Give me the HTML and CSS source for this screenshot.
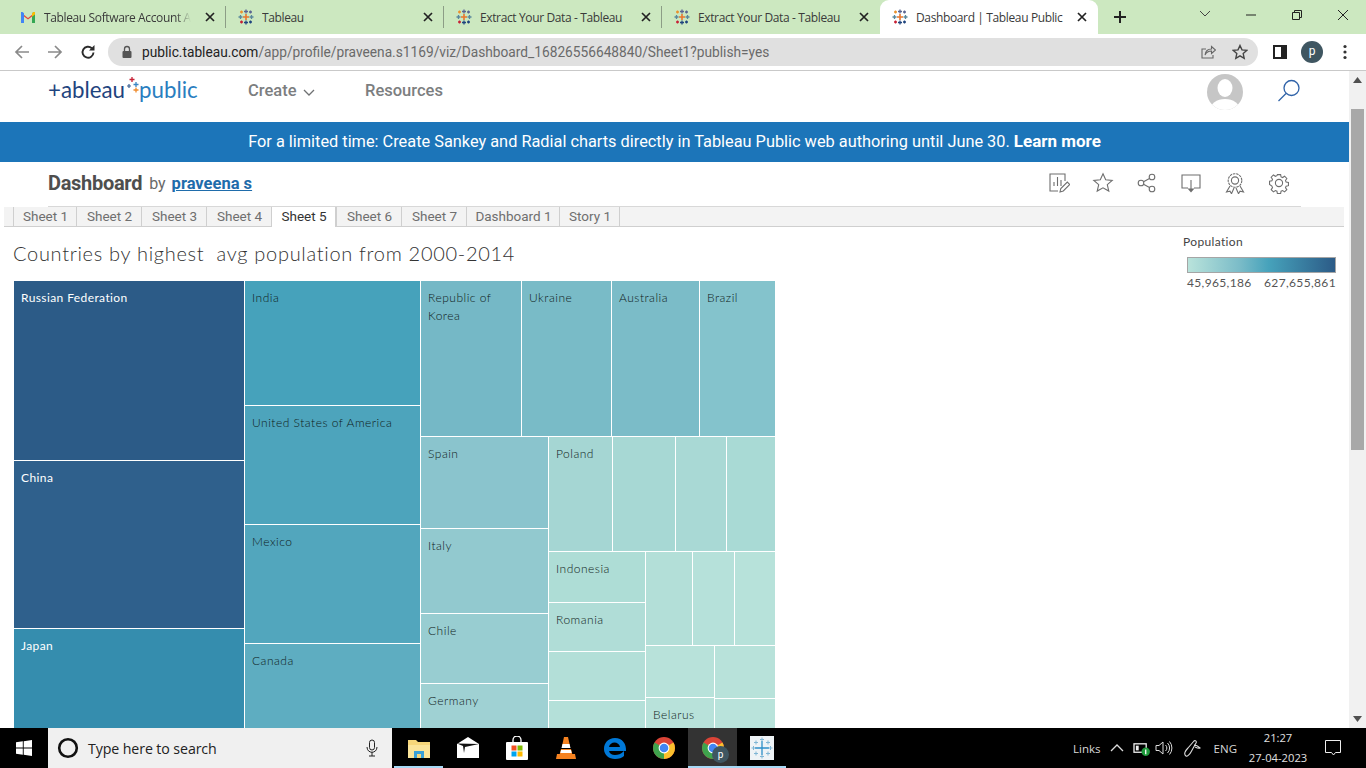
FILE: index.html
```html
<!DOCTYPE html>
<html lang="en">
<head>
<meta charset="utf-8">
<title>Dashboard | Tableau Public</title>
<link rel="stylesheet" href="styles.css">
</head>
<body>
<svg class="defs" width="0" height="0">
  <symbol id="tb" viewBox="0 0 16 16">
    <g fill="none" stroke-width="1.3">
      <path stroke="#e8762d" stroke-width="1.6" d="M8 5v6M5 8h6"/>
      <path stroke="#5b6591" d="M8 .5v4M6 2.5h4"/>
      <path stroke="#1f447e" d="M8 11.5v4M6 13.5h4"/>
      <path stroke="#59879b" d="M.5 8h4M2.5 6v4"/>
      <path stroke="#59879b" d="M11.5 8h4M13.5 6v4"/>
      <path stroke="#eb912c" d="M3.5 1.5v3M2 3h3"/>
      <path stroke="#5b6591" d="M12.5 1.5v3M11 3h3"/>
      <path stroke="#c72035" d="M3.5 11.5v3M2 13h3"/>
      <path stroke="#1f447e" d="M12.5 11.5v3M11 13h3"/>
    </g>
  </symbol>
  <symbol id="cr" viewBox="0 0 24 24">
    <circle cx="12" cy="12" r="11" fill="#db4437"/>
    <path d="M12 12 21.5 6.5A11 11 0 0 1 12 23z" fill="#fbc02d"/>
    <path d="M12 12 12 23A11 11 0 0 1 2.5 6.5z" fill="#3fa34d"/>
    <circle cx="12" cy="12" r="5.4" fill="#fff"/>
    <circle cx="12" cy="12" r="4.3" fill="#4285f4"/>
  </symbol>
  <symbol id="x" viewBox="0 0 10 10">
    <path d="M1 1l8 8M9 1l-8 8" fill="none" stroke="#222" stroke-width="1.7"/>
  </symbol>
</svg>

<header class="chrome">
  <div class="tabstrip">
    <div class="tab">
      <svg class="fav" viewBox="0 0 16 16"><path d="M1 14V3.5L8 9l7-5.5V14h-3V7.5L8 10.5 4 7.5V14z" fill="#e8453c"/><path d="M1 14V3h1.5L4 4.3V14z" fill="#4285f4"/><path d="M12 14V4.3L13.5 3H15v11z" fill="#34a853"/><path d="M12 4.3 13.5 3 15 3v2.5L12 7.7z" fill="#fbbc04"/></svg>
      <span class="tab-title tab-fade">Tableau Software Account Ac</span>
      <svg class="tab-x tab-x-near"><use href="#x"/></svg>
    </div>
    <div class="tab">
      <svg class="fav"><use href="#tb"/></svg>
      <span class="tab-title">Tableau</span>
      <svg class="tab-x"><use href="#x"/></svg>
    </div>
    <div class="tab">
      <svg class="fav"><use href="#tb"/></svg>
      <span class="tab-title">Extract Your Data - Tableau</span>
      <svg class="tab-x"><use href="#x"/></svg>
    </div>
    <div class="tab tab-last">
      <svg class="fav"><use href="#tb"/></svg>
      <span class="tab-title">Extract Your Data - Tableau</span>
      <svg class="tab-x"><use href="#x"/></svg>
    </div>
    <div class="tab tab-active">
      <svg class="fav"><use href="#tb"/></svg>
      <span class="tab-title">Dashboard | Tableau Public</span>
      <svg class="tab-x"><use href="#x"/></svg>
    </div>
    <svg class="newtab" viewBox="0 0 14 14"><path d="M7 1v12M1 7h12" stroke="#222" stroke-width="2" fill="none"/></svg>
    <div class="winctl">
      <svg class="win-i" viewBox="0 0 46 14"><path d="M18 3l5 5 5-5" fill="none" stroke="#444" stroke-width="1"/></svg>
      <svg class="win-i" viewBox="0 0 46 14"><path d="M18 7h10" fill="none" stroke="#222" stroke-width="1"/></svg>
      <svg class="win-i" viewBox="0 0 46 14"><path d="M18.500 4.500h7v7h-7zM20.500 4.500v-2h7v7h-2" fill="none" stroke="#222" stroke-width="1"/></svg>
      <svg class="win-i" viewBox="0 0 46 14"><path d="M18 2l10 10M28 2 18 12" fill="none" stroke="#222" stroke-width="1"/></svg>
    </div>
  </div>
  <div class="toolbar">
    <svg class="tool" viewBox="0 0 16 16"><path d="M15 8H2M8 2 2 8l6 6" fill="none" stroke="#8a8a8a" stroke-width="1.7"/></svg>
    <svg class="tool" viewBox="0 0 16 16"><path d="M1 8h13M8 2l6 6-6 6" fill="none" stroke="#8a8a8a" stroke-width="1.7"/></svg>
    <svg class="tool" viewBox="0 0 16 16"><path d="M13.500 8.500A5.500 5.500 0 1 1 11.800 4.200" fill="none" stroke="#2b2b2b" stroke-width="1.900"/><path d="M14.500 1v5.500H9z" fill="#2b2b2b"/></svg>
    <div class="omnibox">
      <svg class="lock" viewBox="0 0 12 14"><path d="M3.500 6V4a2.500 2.500 0 0 1 5 0v2" fill="none" stroke="#555" stroke-width="1.300"/><rect x="1.500" y="6" width="9" height="7" rx="1" fill="#555"/></svg>
      <span class="url"><span class="url-host">public.tableau.com</span>/app/profile/praveena.s1169/viz/Dashboard_16826556648840/Sheet1?publish=yes</span>
      <svg class="omni-i" viewBox="0 0 16 16"><path d="M6 5H2v9h11v-3" fill="none" stroke="#666" stroke-width="1.100"/><path d="M5 11c.5-4 3.500-6 6.500-6V2.500L15.500 6l-4 3.500V7c-2.500 0-5 1-6.500 4z" fill="none" stroke="#666" stroke-width="1.100"/></svg>
      <svg class="omni-i" viewBox="0 0 16 16"><path d="M8 1.500l2 4.400 4.700.5-3.500 3.200 1 4.700L8 11.900 3.800 14.300l1-4.700L1.300 6.400 6 5.900z" fill="none" stroke="#444" stroke-width="1.400"/></svg>
    </div>
    <svg class="side" viewBox="0 0 14 14"><path d="M0 0h14v14H0z" fill="#222"/><path d="M2 2h6v10H2z" fill="#fff"/></svg>
    <span class="profile">p</span>
    <svg class="menu" viewBox="0 0 4 16"><circle cx="2" cy="2.500" r="1.600" fill="#333"/><circle cx="2" cy="8" r="1.600" fill="#333"/><circle cx="2" cy="13.500" r="1.600" fill="#333"/></svg>
  </div>
</header>

<div class="viewport">
  <main class="page">
    <nav class="sitenav">
      <a class="logo">
        <span class="logo-a">+ableau</span>
        <svg class="logo-stars" viewBox="0 0 12 20">
          <path d="M5 0v5M2.500 2.500h5" stroke="#c72035" stroke-width="1.300" fill="none"/>
          <path d="M9 5v5M6.500 7.500h5" stroke="#3a86c4" stroke-width="1.300" fill="none"/>
          <path d="M2 7v4M0 9h4" stroke="#3a5f91" stroke-width="1.200" fill="none"/>
          <path d="M9 10.500v5M6.500 13h5" stroke="#ef8a2b" stroke-width="1.300" fill="none"/>
        </svg>
        <span class="logo-b">public</span>
      </a>
      <a class="navlink navlink-create">Create
        <svg class="chev" viewBox="0 0 12 7"><path d="M1 1l5 5 5-5" fill="none" stroke="#6f7173" stroke-width="1.300"/></svg>
      </a>
      <a class="navlink">Resources</a>
      <svg class="avatar" viewBox="0 0 36 36"><defs><clipPath id="av"><circle cx="18" cy="18" r="18"/></clipPath></defs><g clip-path="url(#av)"><rect width="36" height="36" fill="#c6c6c6"/><ellipse cx="18" cy="14" rx="7.500" ry="9" fill="#fff"/><ellipse cx="18" cy="36" rx="15" ry="11" fill="#fff"/></g></svg>
      <svg class="search" viewBox="0 0 24 24"><circle cx="14.500" cy="9" r="7.500" fill="none" stroke="#2f62a8" stroke-width="1.300"/><path d="M9 14.500 1.500 22" stroke="#2f62a8" stroke-width="1.300" fill="none"/></svg>
    </nav>

    <div class="banner">For a limited time: Create Sankey and Radial charts directly in Tableau Public web authoring until June 30. <b>Learn more</b></div>

    <div class="titlerow">
      <h1 class="viz-title">Dashboard</h1>
      <span class="by">by</span>
      <a class="author">praveena s</a>
      <div class="viz-actions">
        <svg class="act" viewBox="0 0 22 22"><path d="M17 9V2H2v17h8" fill="none" stroke="#6e6e6e" stroke-width="1.100"/><path d="M6 14v-4M9.500 14V5M13 14v-6" stroke="#6e6e6e" stroke-width="1.100" fill="none"/><path d="M12 20l.8-3.500 6.500-6.500 2.500 2.500-6.500 6.500z" fill="none" stroke="#6e6e6e" stroke-width="1.100"/></svg>
        <svg class="act" viewBox="0 0 22 22"><path d="M11 1.800l2.700 6 6.500.6-4.900 4.300 1.500 6.400L11 15.800l-5.800 3.300 1.500-6.400L1.800 8.400l6.500-.6z" fill="none" stroke="#6e6e6e" stroke-width="1.100"/></svg>
        <svg class="act" viewBox="0 0 22 22"><circle cx="5" cy="11" r="2.800" fill="none" stroke="#6e6e6e" stroke-width="1.100"/><circle cx="16" cy="5" r="2.800" fill="none" stroke="#6e6e6e" stroke-width="1.100"/><circle cx="16" cy="17" r="2.800" fill="none" stroke="#6e6e6e" stroke-width="1.100"/><path d="M7.500 9.700l6-3.300M7.500 12.300l6 3.300" stroke="#6e6e6e" stroke-width="1.100" fill="none"/></svg>
        <svg class="act" viewBox="0 0 22 22"><path d="M8 16H2V3h18v13h-6" fill="none" stroke="#6e6e6e" stroke-width="1.100"/><path d="M11 8v10" stroke="#6e6e6e" stroke-width="1.100"/><path d="M7.500 16.500h7L11 20.500z" fill="#6e6e6e"/></svg>
        <svg class="act" viewBox="0 0 22 22"><circle cx="11" cy="8.500" r="6.800" fill="none" stroke="#6e6e6e" stroke-width="1.100" stroke-dasharray="2.500 .8"/><circle cx="11" cy="8.500" r="3.600" fill="none" stroke="#6e6e6e" stroke-width="1.100"/><path d="M6 14l-3.500 6 3.500-.8 1.500 2.500L10 16M16 14l3.500 6-3.500-.8-1.500 2.500L12 16" fill="none" stroke="#6e6e6e" stroke-width="1.100"/></svg>
        <svg class="act" viewBox="0 0 22 22"><path d="M9.200 2h3.600l.5 2.600 1.700.7 2.200-1.500 2.500 2.500-1.500 2.200.7 1.700 2.600.5v3.600l-2.600.5-.7 1.700 1.500 2.200-2.500 2.500-2.200-1.500-1.700.7-.5 2.600H9.200l-.5-2.600-1.700-.7-2.200 1.500-2.500-2.500 1.500-2.200-.7-1.700L.5 12.900V9.300l2.600-.5.7-1.700L2.300 4.900l2.500-2.500L7 3.900l1.700-.7z" transform="translate(1.100 .8) scale(.9)" fill="none" stroke="#6e6e6e" stroke-width="1.200"/><circle cx="11" cy="11" r="3.600" fill="none" stroke="#6e6e6e" stroke-width="1.100"/></svg>
      </div>
    </div>

    <div class="sheetbar">
      <span class="sheet sheet-first">Sheet 1</span>
      <span class="sheet">Sheet 2</span>
      <span class="sheet">Sheet 3</span>
      <span class="sheet">Sheet 4</span>
      <span class="sheet sheet-on">Sheet 5</span>
      <span class="sheet">Sheet 6</span>
      <span class="sheet">Sheet 7</span>
      <span class="sheet sheet-dash">Dashboard 1</span>
      <span class="sheet sheet-story">Story 1</span>
    </div>

    <section class="viz">
      <div class="viz-main">
        <h2 class="chart-title">Countries by highest  avg population from 2000-2014</h2>
        <div class="tm">
          <div class="tm-col" style="width:230px">
            <div class="cell light" style="height:179px;background:#2c5b87">Russian Federation</div>
            <div class="cell light" style="height:167px;background:#2f608c">China</div>
            <div class="cell light" style="height:180px;background:#358dae">Japan</div>
          </div>
          <div class="tm-col" style="width:175px">
            <div class="cell" style="height:124px;background:#46a2bb">India</div>
            <div class="cell" style="height:118px;background:#4da4bc">United States of America</div>
            <div class="cell" style="height:118px;background:#52a6bd">Mexico</div>
            <div class="cell" style="height:110px;background:#5eadc1">Canada</div>
          </div>
          <div class="tm-col" style="width:354px">
            <div class="tm-row" style="height:155px">
              <div class="cell" style="width:100px;background:#75b8c6">Republic of Korea</div>
              <div class="cell" style="width:89px;background:#79bbc7">Ukraine</div>
              <div class="cell" style="width:87px;background:#7bbcc8">Australia</div>
              <div class="cell" style="width:75px;background:#84c3cc">Brazil</div>
            </div>
            <div class="tm-row" style="height:320px">
              <div class="tm-col" style="width:127px">
                <div class="cell" style="height:91px;background:#8ac4cd">Spain</div>
                <div class="cell" style="height:84px;background:#92c9cf">Italy</div>
                <div class="cell" style="height:69px;background:#98cdd1">Chile</div>
                <div class="cell" style="height:72px;background:#9fd1d3">Germany</div>
              </div>
              <div class="tm-col" style="width:226px">
                <div class="tm-row" style="height:114px">
                  <div class="cell" style="width:63px;background:#a5d6d3">Poland</div>
                  <div class="cell" style="width:62px;background:#a7d8d4"></div>
                  <div class="cell" style="width:50px;background:#a9d9d5"></div>
                  <div class="cell" style="width:48px;background:#a9dad5"></div>
                </div>
                <div class="tm-row" style="height:205px">
                  <div class="tm-col" style="width:96px">
                    <div class="cell" style="height:50px;background:#aeddd6">Indonesia</div>
                    <div class="cell" style="height:48px;background:#b0ddd7">Romania</div>
                    <div class="cell" style="height:48px;background:#b3dfd8"></div>
                    <div class="cell" style="height:56px;background:#b4e0d9"></div>
                  </div>
                  <div class="tm-col" style="width:129px">
                    <div class="tm-row" style="height:93px">
                      <div class="cell" style="width:46px;background:#b3dfd8"></div>
                      <div class="cell" style="width:41px;background:#b6e1da"></div>
                      <div class="cell" style="width:40px;background:#b7e2da"></div>
                    </div>
                    <div class="tm-row" style="height:111px">
                      <div class="tm-col" style="width:68px">
                        <div class="cell" style="height:51px;background:#b8e2da"></div>
                        <div class="cell" style="height:59px;background:#b8e2da">Belarus</div>
                      </div>
                      <div class="tm-col" style="width:60px">
                        <div class="cell" style="height:52px;background:#b8e2da"></div>
                        <div class="cell" style="height:58px;background:#b9e3db"></div>
                      </div>
                    </div>
                  </div>
                </div>
              </div>
            </div>
          </div>
        </div>
      </div>
      <aside class="legend">
        <div class="legend-title">Population</div>
        <div class="legend-bar"></div>
        <div class="legend-vals"><span>45,965,186</span><span>627,655,861</span></div>
      </aside>
    </section>
  </main>
  <div class="scrollbar">
    <svg class="sb-arrow" viewBox="0 0 9 6"><path d="M4.500 0 9 6H0z" fill="#505050"/></svg>
    <div class="sb-gap-top"></div>
    <div class="sb-thumb"></div>
    <div class="sb-gap"></div>
    <svg class="sb-arrow" viewBox="0 0 9 6"><path d="M0 0h9L4.500 6z" fill="#505050"/></svg>
  </div>
</div>

<footer class="taskbar">
  <svg class="start" viewBox="0 0 16 16"><path d="M0 2.300 6.800 1.300v6.200H0zM7.700 1.200 16 0v7.500H7.700zM0 8.500h6.800v6.200L0 13.700zM7.700 8.500H16V16l-8.300-1.200z" fill="#fff"/></svg>
  <div class="searchbox">
    <svg class="cortana" viewBox="0 0 22 22"><circle cx="11" cy="11" r="8.800" fill="none" stroke="#111" stroke-width="2.600"/></svg>
    <span class="search-text">Type here to search</span>
    <svg class="mic" viewBox="0 0 12 18"><rect x="3.500" y="1" width="5" height="10" rx="2.500" fill="none" stroke="#222"/><path d="M1 8c0 7 10 7 10 0M6 13v4M3 17h6" fill="none" stroke="#222"/></svg>
  </div>
  <div class="tb-app tb-open">
    <svg class="tb-icon" viewBox="0 0 24 24"><path d="M1 4h8l2 2h12v16H1z" fill="#f6d67a"/><path d="M1 9h22v13H1z" fill="#fbe49a"/><path d="M7 15h10v7H7z" fill="#3aa0d8"/><path d="M10 18h4v4h-4z" fill="#f6d67a"/></svg>
  </div>
  <div class="tb-app">
    <svg class="tb-icon" viewBox="0 0 24 24"><path d="M1 8 12 1l11 7v14H1z" fill="#fff"/><path d="M1 7.500 23 8 9 11l-1 6-1-7z" fill="#111"/></svg>
  </div>
  <div class="tb-app">
    <svg class="tb-icon" viewBox="0 0 24 24"><path d="M8 7V4a4 4 0 0 1 8 0v3" fill="none" stroke="#fff" stroke-width="1.300"/><rect x="1" y="6" width="22" height="18" rx="1" fill="#fff"/><rect x="6.500" y="9.500" width="5" height="5" fill="#f25022"/><rect x="12.500" y="9.500" width="5" height="5" fill="#7fba00"/><rect x="6.500" y="15.500" width="5" height="5" fill="#00a4ef"/><rect x="12.500" y="15.500" width="5" height="5" fill="#ffb900"/></svg>
  </div>
  <div class="tb-app">
    <svg class="tb-icon" viewBox="0 0 24 24"><path d="M10 1h4l2 9H8z" fill="#f58220"/><path d="M8.500 8h7l1 4h-9z" fill="#fff"/><path d="M7 13h10l1.500 6h-13z" fill="#f58220"/><path d="M3 18h18l1 5H2z" fill="#f58220"/><path d="M7 14h10l.7 3H6.300z" fill="#fff"/></svg>
  </div>
  <div class="tb-app">
    <svg class="tb-icon" viewBox="0 0 24 24"><path d="M12 2C5 2 1 7 1 13c0 6 5 10 11 10 4 0 7-1 9-3v-5c-3 3-6 4-9 4-3 0-5.500-1.500-6-4h17c.5-7-3.500-13-11-13zM6 11c.5-3 3-4.500 5.500-4.500S16.500 8 17 11z" fill="#0078d7"/></svg>
  </div>
  <div class="tb-app">
    <svg class="tb-icon"><use href="#cr"/></svg>
  </div>
  <div class="tb-app tb-open tb-active">
    <svg class="tb-icon"><use href="#cr"/></svg>
    <span class="tb-badge">p</span>
  </div>
  <div class="tb-app tb-open">
    <svg class="tb-tab" viewBox="0 0 24 24"><rect width="24" height="24" fill="#eef3f6"/><path d="M12 5v14M5 12h14" stroke="#2c8fc9" stroke-width="1.300"/><path d="M12 1.500v4M10 3.500h4M12 18.500v4M10 20.500h4M1.500 12h4M3.500 10v4M18.500 12h4M20.500 10v4M6 4.500v4M4 6.500h4M18 4.500v4M16 6.500h4M6 15.500v4M4 17.500h4M18 15.500v4M16 17.500h4" stroke="#7fb6d5" stroke-width="1"/></svg>
  </div>
  <div class="tray">
    <span class="tray-text tray-links">Links</span>
    <svg class="tray-caret" viewBox="0 0 14 8"><path d="M1 7l6-6 6 6" fill="none" stroke="#ddd" stroke-width="1.300"/></svg>
    <svg class="tray-bat" viewBox="0 0 18 16"><rect x="1" y="3" width="13" height="9" fill="none" stroke="#eee" stroke-width="1.400"/><rect x="3" y="5" width="3" height="5" fill="#eee"/><circle cx="13.500" cy="11.500" r="4.500" fill="#1e9b3b"/><path d="M13.500 9v5" stroke="#fff" stroke-width="1.400"/></svg>
    <svg class="tray-sp" viewBox="0 0 18 16"><path d="M1 5.500h3L8 2v12L4 10.500H1z" fill="none" stroke="#ddd"/><path d="M10.500 5a4 4 0 0 1 0 6M12.500 3a7 7 0 0 1 0 10M14.500 1.500a10 10 0 0 1 0 13" fill="none" stroke="#ddd"/></svg>
    <svg class="tray-pen" viewBox="0 0 20 18"><path d="M3 17c-3-2 0-6 2-8l6-7c1-1 3 0 2 2l-5 9c-1 2-4 5-5 4zM11 6c2 0 4 1 6 3-1 1-3 0-5-1" fill="none" stroke="#ddd" stroke-width="1.100"/></svg>
    <span class="tray-text tray-lang">ENG</span>
    <div class="clock"><span>21:27</span><span>27-04-2023</span></div>
    <svg class="tray-note" viewBox="0 0 16 16"><path d="M.5.500h15v12h-5l-2 2.500-2-2.500H.5z" fill="none" stroke="#eee"/></svg>
  </div>
</footer>
</body>
</html>
```

FILE: styles.css
```css
* { box-sizing: border-box; }
html, body { margin: 0; height: 100%; }
body {
  width: 1366px; height: 768px; overflow: hidden;
  display: flex; flex-direction: column;
  font-family: Roboto, "Liberation Sans", sans-serif;
  background: #fff;
}
.defs { display: block; height: 0; }
h1, h2 { margin: 0; font-weight: normal; }

/* browser chrome */
.chrome { flex: 0 0 71px; border-bottom: 1px solid #c9c9c9; }
.tabstrip { height: 34px; background: #cce8c0; display: flex; align-items: center; padding-left: 8px; }
.tab { flex: 0 0 218px; height: 34px; display: flex; align-items: center; padding-left: 12px; position: relative; }
.tab:nth-child(1), .tab:nth-child(2), .tab:nth-child(3) { border-right: 1px solid #8c9d86; border-image: linear-gradient(#cce8c0 7px, #8c9d86 7px, #8c9d86 27px, #cce8c0 27px) 1; }
.tab-active { background: #fff; border-radius: 9px 9px 0 0; }
.fav { width: 16px; height: 16px; flex: none; }
.tab-title { margin-left: 8px; width: 147px; font: 12px "Open Sans", sans-serif; color: #3a3a3a; white-space: nowrap; overflow: hidden; letter-spacing: -.37px; }
.tab-fade { width: 153px; -webkit-mask-image: linear-gradient(90deg, #000 132px, transparent 147px); mask-image: linear-gradient(90deg, #000 132px, transparent 147px); }
.tab-x { width: 10px; height: 10px; margin-left: 14px; flex: none; }
.tab-x-near { margin-left: 8px; }
.newtab { width: 14px; height: 14px; margin-left: 15px; }
.winctl { margin-left: auto; display: flex; }
.win-i { width: 46px; height: 14px; margin-top: -4px; }
.toolbar { height: 36px; display: flex; align-items: center; padding-left: 14px; background: #fff; }
.tool { width: 16px; height: 16px; margin-right: 17px; flex: none; }
.omnibox { margin-left: -5px; width: 1150px; height: 28px; border-radius: 14px; background: #e0e0e0; display: flex; align-items: center; padding: 0 10px 0 13px; }
.lock { width: 12px; height: 14px; flex: none; }
.url { margin-left: 9px; flex: 1; font: 13.720px Roboto, sans-serif; color: #6a6a6a; white-space: nowrap; }
.url-host { color: #222; }
.omni-i { width: 16px; height: 16px; margin-left: 16px; flex: none; }
.side { width: 14px; height: 14px; margin-left: 15px; }
.profile { width: 22px; height: 22px; border-radius: 50%; background: #3f5661; color: #fff; font: 12px/21px Roboto, sans-serif; text-align: center; margin-left: 14px; }
.menu { width: 4px; height: 16px; margin-left: 20px; }

/* page */
.viewport { flex: 1; min-height: 0; display: flex; }
.page { width: 1349px; overflow: hidden; flex: none; }
.scrollbar { width: 17px; background: #f1f1f1; display: flex; flex-direction: column; align-items: center; padding: 3px 0; }
.sb-arrow { width: 9px; height: 6px; flex: none; margin: 3px 0; }
.sb-gap-top { height: 23px; flex: none; }
.sb-thumb { width: 13px; height: 341px; background: #a8a8a8; flex: none; }
.sb-gap { flex: 1; }

.sitenav { height: 51px; display: flex; align-items: center; padding: 0 0 12px 48px; }
.logo { display: flex; align-items: center; width: 200px; height: 40px; padding-bottom: 2px; }
.logo-a { font: 400 22.300px Lato, sans-serif; color: #1f447e; }
.logo-b { font: 400 22.300px Lato, sans-serif; color: #2a7ec0; }
.logo-stars { width: 12px; height: 20px; margin: -6px 0 0 2px; flex: none; }
.navlink { font: 500 16.500px Roboto, sans-serif; color: #7c7e80; display: flex; align-items: center; }
.navlink-create { width: 117px; }
.chev { width: 12px; height: 7px; margin-left: 6px; margin-top: 3px; }
.avatar { width: 36px; height: 36px; margin: 1px 0 -1px auto; }
.search { width: 24px; height: 24px; margin-left: 34px; margin-right: 48px; }

.banner { height: 40px; background: #1c75b9; color: #fff; text-align: center; font: 16.340px/39px Roboto, sans-serif; }
.banner b { font-weight: 700; font-size: 17px; }

.titlerow { height: 45px; display: flex; align-items: center; margin: 0 48px; border-bottom: 1px solid #d8d8d8; padding-bottom: 2px; }
.viz-title { font: 700 20px Roboto, sans-serif; color: #4e4e4e; letter-spacing: -.3px; }
.by { font: 16px Roboto, sans-serif; color: #6a6a6a; margin-left: 7px; }
.author { font: 700 16.500px Roboto, sans-serif; color: #1f6cab; text-decoration: underline; margin-left: 6px; }
.viz-actions { margin-left: auto; display: flex; gap: 22px; margin-right: 11px; }
.act { width: 22px; height: 22px; flex: none; }

.sheetbar { margin-left: 4px; width: 1340px; height: 20px; background: #f3f3f3; border-bottom: 1px solid #cfcfcf; display: flex; padding-left: 9px; }
.sheet { width: 65px; height: 19px; border-left: 1px solid #cfcfcf; padding-left: 1px; font: 13.500px/19px Roboto, sans-serif; color: #6f6f6f; text-align: center; }
.sheet-first { width: 63px; }
.sheet-on { background: #fff; color: #333; height: 20px; border-right: 1px solid #cfcfcf; }
.sheet-dash { width: 93px; }
.sheet-story { width: 61px; border-right: 1px solid #cfcfcf; }

.viz { display: flex; height: 520px; }
.viz-main { width: 1170px; padding: 13px 0 0 14px; }
.chart-title { font: 300 20px/26px Lato, sans-serif; color: #333; white-space: pre; letter-spacing: .7px; margin-left: -1px; }
.tm { display: flex; gap: 1px; margin-top: 15px; width: 761px; }
.tm-col { display: flex; flex-direction: column; gap: 1px; flex: none; }
.tm-row { display: flex; gap: 1px; flex: none; }
.cell { flex: none; padding: 8px 7px; font: 300 12px/18px Lato, sans-serif; color: #0f1b20; letter-spacing: .5px; overflow: hidden; }
.light { color: #fff; font-weight: 400; letter-spacing: .4px; }

.legend { padding: 7px 0 0 13px; font: 12px Lato, sans-serif; color: #555; letter-spacing: .35px; width: 179px; }
.legend-title { height: 16px; line-height: 16px; color: #444; }
.legend-bar { margin: 7px 0 0 4px; width: 149px; height: 16px; border: 1px solid #a5a5a5; background: linear-gradient(90deg, #b9e3db, #7bbcc8 35%, #46a2bb 55%, #2c5b87); }
.legend-vals { margin: 3px 0 0 4px; width: 149px; display: flex; justify-content: space-between; line-height: 14px; white-space: nowrap; }

/* taskbar */
.taskbar { flex: 0 0 40px; background: #000; display: flex; align-items: center; }
.start { width: 16px; height: 16px; margin: 0 16px; flex: none; }
.searchbox { width: 344px; height: 40px; background: #f0f0f0; display: flex; align-items: center; padding: 0 14px 0 9px; flex: none; margin-right: 2px; }
.cortana { width: 22px; height: 22px; flex: none; }
.search-text { font: 14.200px "Open Sans", sans-serif; color: #222; margin-left: 9px; flex: 1; letter-spacing: -.1px; }
.mic { width: 12px; height: 18px; }
.tb-app { width: 49px; height: 40px; display: flex; align-items: center; justify-content: center; position: relative; flex: none; }
.tb-icon { width: 24px; height: 24px; }
.tb-open { box-shadow: inset 0 -2px 0 #a6d8f5; }
.tb-active { background: #333; }
.tb-tab { width: 24px; height: 24px; }
.tb-badge { position: absolute; left: 24px; top: 18px; width: 17px; height: 17px; border-radius: 50%; background: #3f5661; color: #fff; font: 10px/17px Roboto, sans-serif; text-align: center; }
.tray { margin-left: auto; display: flex; align-items: center; height: 40px; color: #ddd; }
.tray-text { font: 11.500px "Open Sans", sans-serif; color: #d8d8d8; }
.tray-links { margin-right: 9px; }
.tray-caret { width: 14px; height: 8px; margin-right: 9px; }
.tray-bat { width: 17px; height: 15px; margin-right: 5px; }
.tray-sp { width: 18px; height: 16px; margin-right: 10px; }
.tray-pen { width: 20px; height: 18px; margin-right: 11px; }
.clock { width: 70px; margin-left: 6px; text-align: center; display: flex; flex-direction: column; font: 11.200px/20px "Open Sans", sans-serif; color: #e0e0e0; }
.tray-note { width: 16px; height: 16px; margin: 0 25px 0 12px; }
```
